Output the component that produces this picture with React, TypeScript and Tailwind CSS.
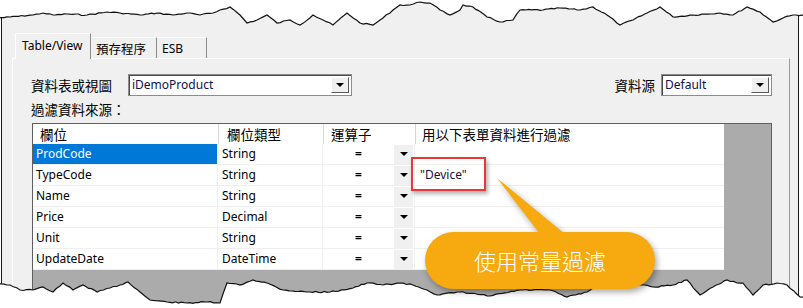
import React from "react";

const FONT = "font-['Noto_Sans','Noto_Sans_CJK_TC',sans-serif]";
const CJK = "font-['Noto_Sans_CJK_TC','Noto_Sans',sans-serif]";

function Tri() {
  return <div className="w-0 h-0 border-x-[4px] border-x-transparent border-t-[4px] border-t-black" />;
}

function Combo({ className, text }: { className: string; text: string }) {
  return (
    <div className={"flex h-[22px] items-stretch bg-white border border-[#8c8c8c] shadow-[inset_1px_1px_0_#4a4a4a] " + className}>
      <div className="flex-1 pl-[3px] text-[12px] leading-[20px] text-[#10104a]">{text}</div>
      <div className="w-[18px] my-[2px] mr-[2px] bg-[#f0f0f0] border-t border-l border-white border-r border-b border-r-[#5a5a5a] border-b-[#5a5a5a] flex items-center justify-center">
        <Tri />
      </div>
    </div>
  );
}

function jag(keys: [number, number][], seed: number) {
  let s = seed;
  const rnd = () => {
    s = (s * 9301 + 49297) % 233280;
    return s / 233280;
  };
  const pts: string[] = [];
  for (let i = 0; i < keys.length - 1; i++) {
    const [x0, y0] = keys[i];
    const [x1, y1] = keys[i + 1];
    const n = Math.max(1, Math.round((x1 - x0) / 3));
    for (let k = 0; k < n; k++) {
      const t = k / n;
      const x = x0 + (x1 - x0) * t;
      const y = y0 + (y1 - y0) * t + (k === 0 ? 0 : (rnd() - 0.5) * 1.3);
      pts.push(`${x.toFixed(1)},${y.toFixed(1)}`);
    }
  }
  const l = keys[keys.length - 1];
  pts.push(`${l[0]},${l[1]}`);
  return pts;
}

const topKeys: [number, number][] = [
  [-2, 18], [10, 17], [33, 15], [43, 13], [53, 15], [67, 14], [87, 15], [107, 12], [120, 13], [140, 15],
  [157, 13], [173, 15], [187, 13], [200, 15], [213, 13], [220, 10], [230, 7], [240, 15], [247, 23],
  [257, 20], [267, 15], [277, 23], [290, 20], [300, 25], [313, 15], [323, 20], [333, 25], [347, 13],
  [360, 23], [373, 25], [383, 18], [393, 10], [400, 5], [410, 5], [420, 2], [430, 3], [440, 10],
  [450, 15], [460, 10], [463, 5], [473, 7], [487, 17], [500, 22], [513, 20], [520, 10], [543, 10],
  [560, 8], [580, 10], [593, 7], [607, 15], [620, 25], [633, 20], [647, 13], [660, 7], [673, 17],
  [693, 15], [720, 13], [733, 15], [747, 7], [760, 12], [773, 22], [783, 18], [793, 15], [805, 15],
];

const botKeys: [number, number][] = [
  [-2, 283], [10, 285], [20, 290], [33, 290], [43, 287], [53, 292], [63, 283], [73, 290], [83, 285],
  [97, 292], [110, 288], [120, 285], [128, 282], [140, 292], [150, 300], [167, 302], [187, 303],
  [207, 302], [220, 303], [227, 283], [240, 285], [253, 280], [267, 283], [283, 290], [307, 292],
  [330, 292], [353, 288], [367, 283], [383, 285], [400, 283], [413, 285], [427, 290], [437, 295],
  [460, 292], [490, 296], [520, 290], [550, 290], [567, 297], [587, 292], [600, 282], [613, 285],
  [633, 283], [653, 287], [673, 285], [687, 280], [700, 295], [713, 287], [727, 280], [737, 283],
  [743, 283], [753, 295], [763, 285], [777, 283], [787, 285], [800, 297], [805, 297],
];

const rows = [
  { f: "ProdCode", t: "String", v: "" },
  { f: "TypeCode", t: "String", v: '"Device"' },
  { f: "Name", t: "String", v: "" },
  { f: "Price", t: "Decimal", v: "" },
  { f: "Unit", t: "String", v: "" },
  { f: "UpdateDate", t: "DateTime", v: "" },
];

export default function App() {
  const tp = jag(topKeys, 7);
  const bp = jag(botKeys, 13);
  return (
    <div className={"relative w-[803px] h-[308px] overflow-hidden bg-white text-black " + FONT}>
      {/* window */}
      <div className="ml-[1px] w-[798px] h-[308px] border-x border-[#1a1a1a] bg-[#f0f0f0] pt-[33px]">
        {/* tabs */}
        <div className="flex items-end h-[25px] pl-[13px]">
          <div className="relative z-10 -mb-px h-[26px] w-[76px] bg-[#f0f0f0] border-t border-l border-white border-r border-r-[#8a8a8a] pl-[6px] pt-[4px] text-[12px] leading-[16px]">
            Table/View
          </div>
          <div className={"h-[21px] w-[66px] border-t border-white border-r border-r-[#8a8a8a] pl-[5px] pt-[2px] text-[12.5px] leading-[17px] " + CJK}>
            預存程序
          </div>
          <div className="h-[21px] w-[50px] border-t border-white border-r border-r-[#8a8a8a] pl-[5px] pt-[3px] text-[12px] leading-[16px]">
            ESB
          </div>
        </div>
        {/* panel */}
        <div className="ml-[10px] w-[778px] h-[260px] border-t border-l border-white border-r border-r-[#9a9a9a] pt-[15px] pl-[18px] pr-[17px]">
          <div className="flex items-center justify-between h-[22px]">
            <div className="flex items-center">
              <div className={"w-[97px] text-[13.5px] leading-[18px] " + CJK}>資料表或視圖</div>
              <Combo className="w-[224px]" text="iDemoProduct" />
            </div>
            <div className="flex items-center">
              <div className={"mr-[6px] text-[13.5px] leading-[18px] " + CJK}>資料源</div>
              <Combo className="w-[111px]" text="Default" />
            </div>
          </div>
          <div className={"mt-[5px] h-[16px] text-[13.5px] leading-[16px] " + CJK}>過濾資料來源：</div>
          {/* grid */}
          <div className="mt-[6px] ml-[1px] w-[740px] h-[200px] border-l border-t border-r border-[#5f5f5f] bg-[#ababab]">
            <div className={"flex h-[20px] w-[691px] bg-white text-[13.5px] leading-[20px] " + CJK}>
              <div className="w-[185px] pl-[7px]">欄位</div>
              <div className="w-[105px] pl-[8px] border-l border-[#d8d8d8]">欄位類型</div>
              <div className="w-[92px] pl-[7px] border-l border-[#d8d8d8]">運算子</div>
              <div className="w-[309px] pl-[6px] border-l border-[#d8d8d8]">用以下表單資料進行過濾</div>
            </div>
            {rows.map((r, i) => (
              <div key={r.f} className="flex h-[21px] w-[691px] bg-white border-b border-[#efefef] text-[12px] leading-[20px]">
                <div className={"w-[185px] pl-[3px] border-r border-[#efefef] " + (i === 0 ? "bg-[#0078d7] text-white" : "")}>
                  {r.f}
                </div>
                <div className="w-[105px] pl-[4px] border-r border-[#efefef]">{r.t}</div>
                <div className="w-[92px] flex items-center border-r border-[#efefef]">
                  <div className="w-[71px] text-center font-bold text-[12px]">=</div>
                  <div className="w-[19px] h-[19px] bg-[#f0f0f0] flex items-center justify-center">
                    <Tri />
                  </div>
                </div>
                <div className="w-[309px] pl-[5px] text-[#15153a]">{r.v}</div>
              </div>
            ))}
          </div>
        </div>
      </div>

      {/* torn edges */}
      <svg className="absolute left-0 top-0" width="803" height="308" viewBox="0 0 803 308">
        <path d={`M${tp.join(" L")} L805,-2 L-2,-2 Z`} fill="#ffffff" />
        <polyline points={tp.join(" ")} fill="none" stroke="#111" strokeWidth="1.2" />
        <path d={`M${bp.join(" L")} L805,310 L-2,310 Z`} fill="#ffffff" />
        <polyline points={bp.join(" ")} fill="none" stroke="#111" strokeWidth="1.2" />
      </svg>

      {/* red highlight box */}
      <div className="absolute left-[411px] top-[157px] w-[75px] h-[34px] border-2 border-[#e8383a] shadow-[2px_3px_4px_rgba(0,0,0,0.3)]" />

      {/* callout */}
      <svg className="absolute left-0 top-0 drop-shadow-[2px_3px_3px_rgba(0,0,0,0.35)]" width="803" height="308" viewBox="0 0 803 308">
        <path d="M497,178 L540,234 L565,234 Z" fill="#f6aa0f" />
        <rect x="425" y="232" width="230" height="57" rx="28.5" fill="#f6aa0f" />
      </svg>
      <div className={"absolute left-[425px] top-[232px] w-[230px] h-[57px] flex items-center justify-center text-white text-[22px] font-light tracking-[0px] " + CJK}>
        使用常量過濾
      </div>
    </div>
  );
}
